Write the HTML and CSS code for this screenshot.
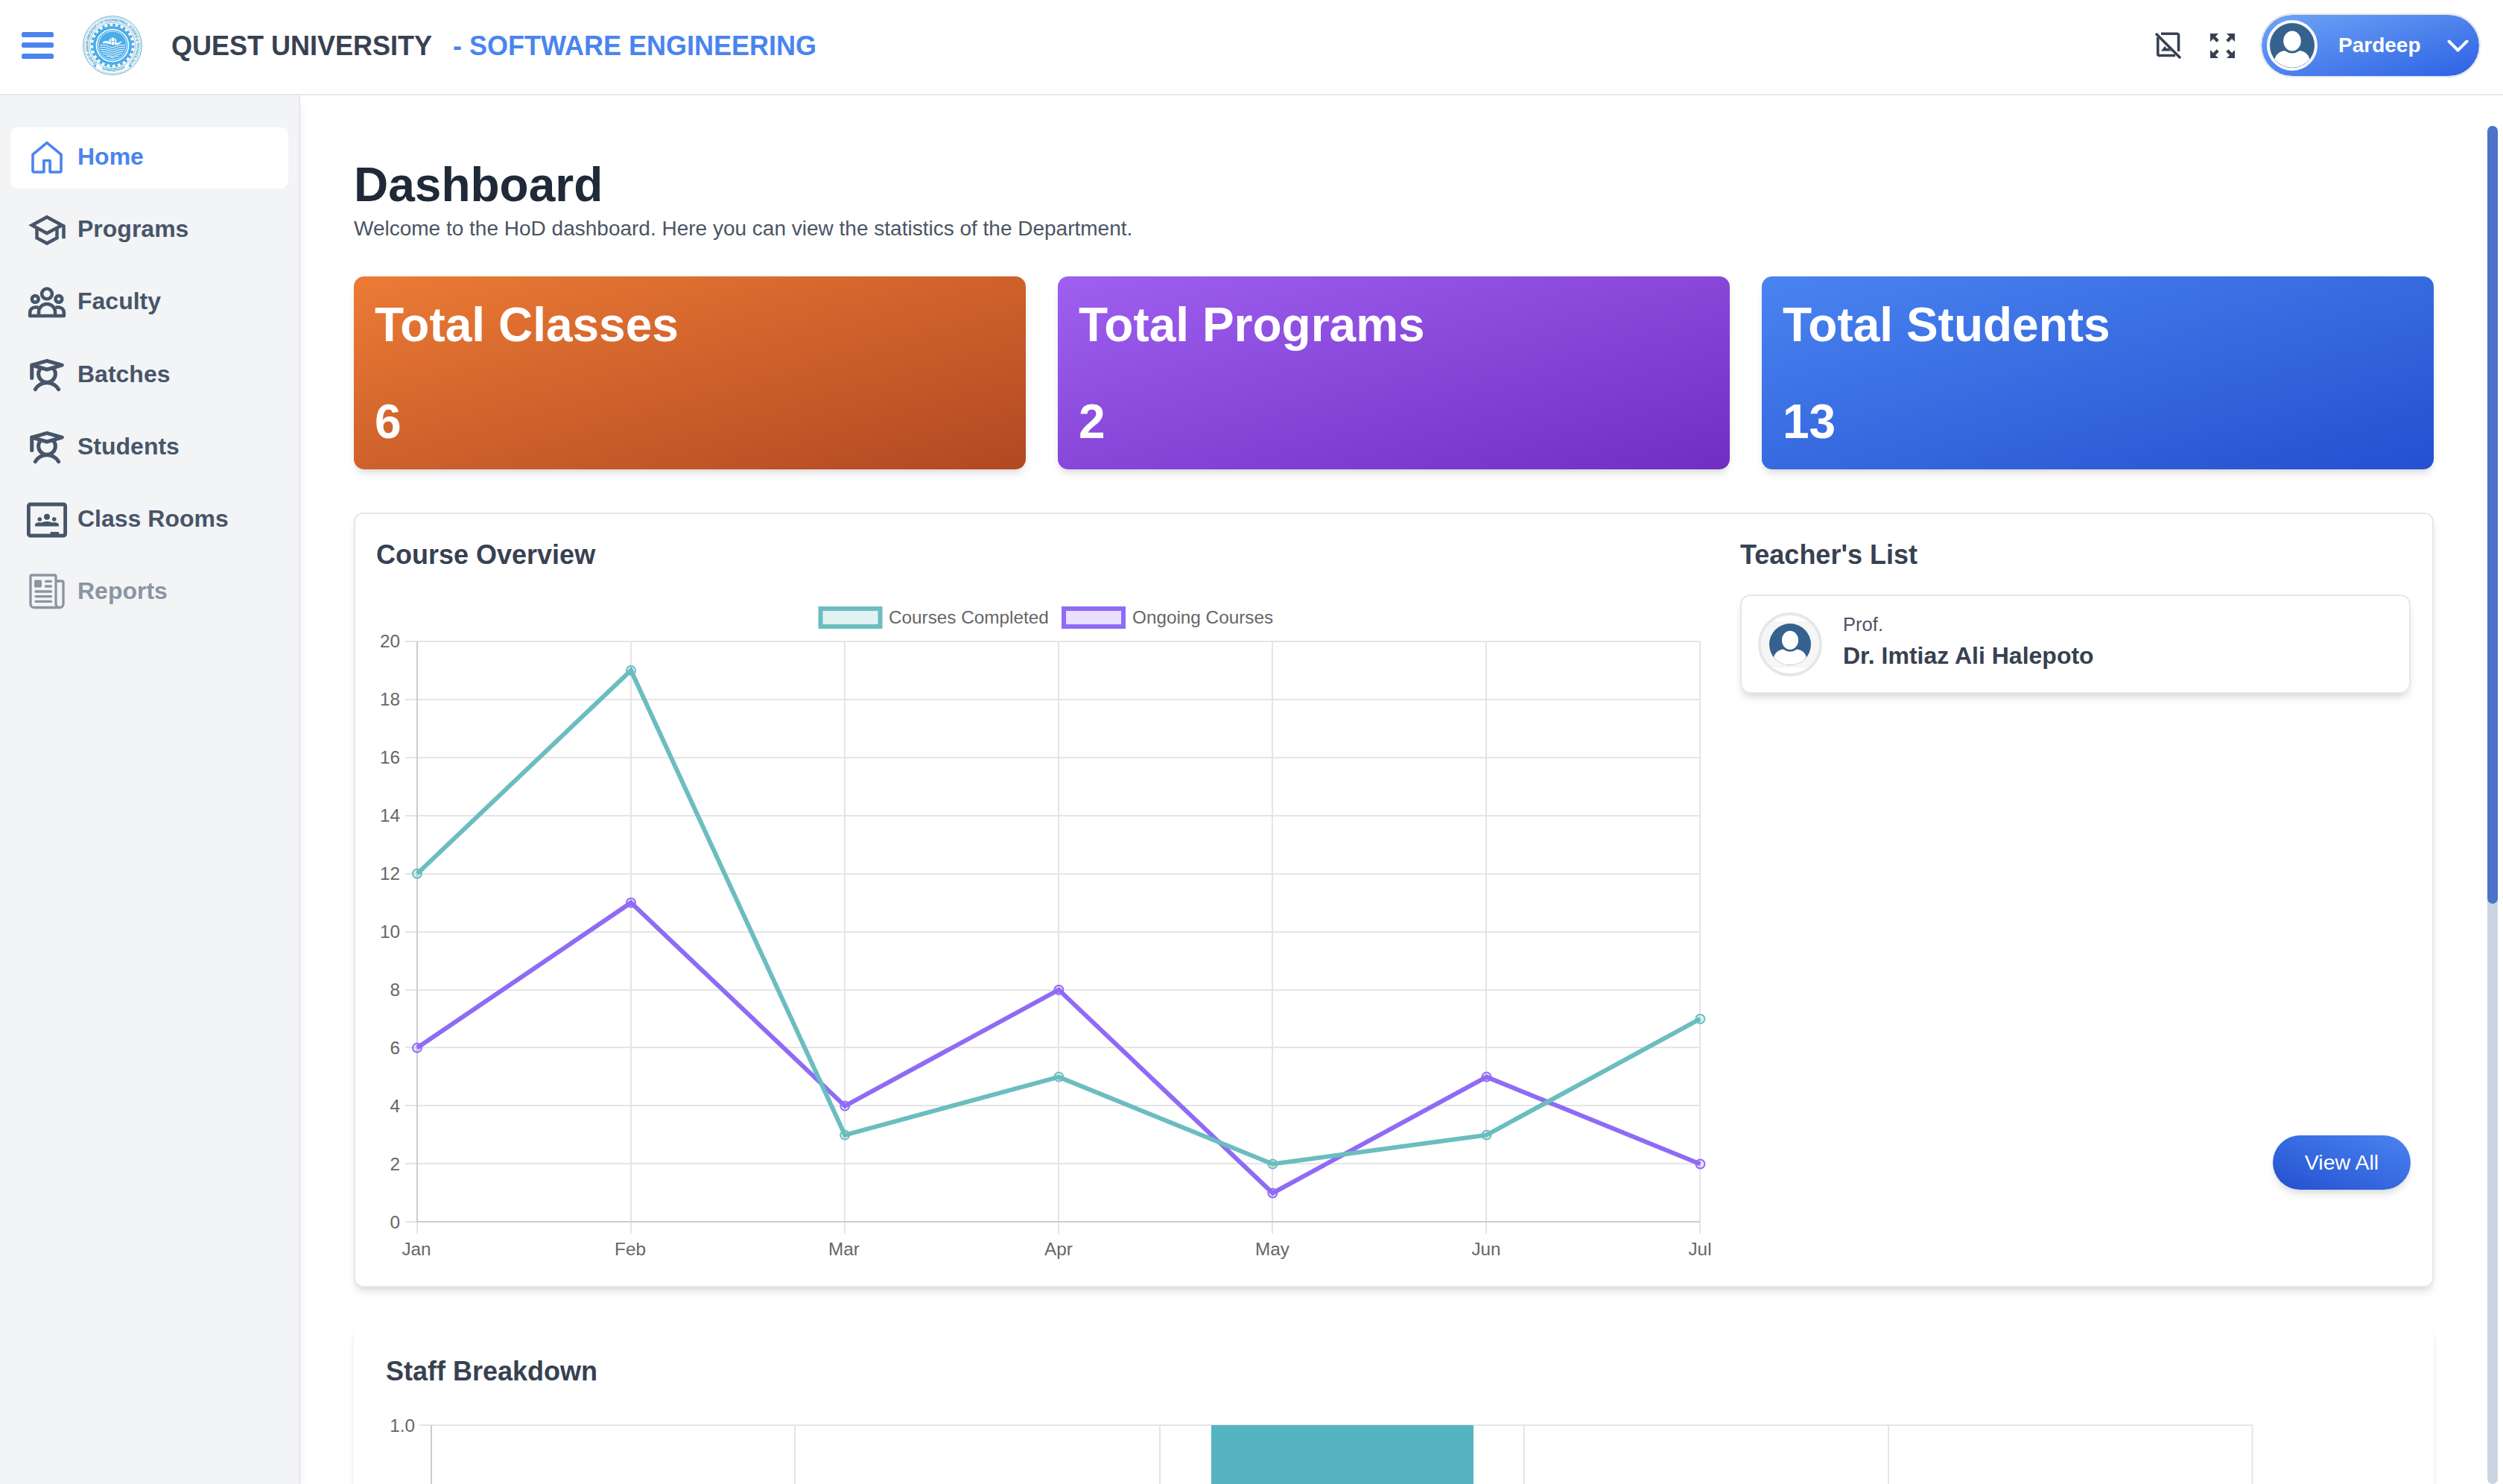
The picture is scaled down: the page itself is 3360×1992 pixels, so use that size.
FILE: index.html
```html
<!DOCTYPE html>
<html lang="en">
<head>
<meta charset="utf-8">
<title>Quest University - Dashboard</title>
<link rel="stylesheet" href="styles.css">
</head>
<body>
<svg class="defs" aria-hidden="true">
  <symbol id="student" viewBox="0 0 256 256">
    <g fill="none" stroke="currentColor" stroke-width="24" stroke-linecap="round" stroke-linejoin="round">
      <path d="M32 62 128 35l96 27-96 28ZM32 62v82M83 88a54 54 0 1 0 90 0M54 216c16-26 42-42 74-42s58 16 74 42"/>
    </g>
  </symbol>
  <symbol id="person" viewBox="0 0 60 60">
    <circle cx="30" cy="30" r="30" fill="#35618e"/>
    <path d="M6.500 48.500C8 42 13 38 20 37q10 7 20 0c7 1 12 5 13.500 11.500A30 30 0 0 1 6.500 48.500Z" fill="#fff"/>
    <ellipse cx="30" cy="24" rx="11.800" ry="13.500" fill="#fff"/>
  </symbol>
</svg>

<header class="topbar">
  <svg class="menu" viewBox="0 0 43 36" fill="#4a84ee"><rect width="43" height="7" rx="2.500"/><rect y="14" width="43" height="7" rx="2.500"/><rect y="29" width="43" height="7" rx="2.500"/></svg>
  <svg class="logo" viewBox="0 0 80 80">
    <defs>
      <path id="arc-top" d="M20.700 66.200A32.500 32.500 0 1 1 59.300 66.200"/>
      <path id="arc-bottom" d="M22 70A35 35 0 0 0 58 70"/>
    </defs>
    <g fill="none" stroke="#5fb0cf">
      <circle cx="40" cy="40" r="39.400" stroke-width="1"/>
      <circle cx="40" cy="40" r="37.600" stroke-width=".5"/>
      <circle cx="40" cy="40" r="30.800" stroke-width=".8"/>
    </g>
    <circle cx="40" cy="40" r="26" fill="#4aace8"/>
    <circle cx="40" cy="40" r="27.500" fill="none" stroke="#4aace8" stroke-width="3.500" stroke-dasharray="3.600 3.600"/>
    <circle cx="40" cy="40" r="21.500" fill="none" stroke="#fff" stroke-width="1.600"/>
    <circle cx="40" cy="40" r="19" fill="none" stroke="#fff" stroke-width=".8"/>
    <circle cx="40.500" cy="34.500" r="5" fill="#fff"/>
    <path d="M27 35c5-2 9-1 13 1 5 2 9 0 13-2-2 4-6 6-11 5-6-1-10-2-15-2Z" fill="#fff"/>
    <path d="M38.500 30v9M42.500 30v9M36 34.500h9" stroke="#4aace8" stroke-width=".7"/>
    <g fill="none" stroke="#fff" stroke-width="1"><path d="M23 39q9 0 17 4 8-4 17-4M23 42q9 0 17 4 8-4 17-4M23.500 45q9 0 16.500 4 8-4 16.500-4M25 48q8 0 15 4 7-4 15-4M27 51q7 0 13 4 6-4 13-4M31 54q5 0 9 3 4-3 9-3"/></g>
    <text class="seal"><textPath href="#arc-top" textLength="158" startOffset="2">QUAID-E-AWAM UNIVERSITY OF ENGINEERING, SCIENCE &amp; TECHNOLOGY</textPath></text>
    <text class="seal seal-town"><textPath href="#arc-bottom" startOffset="4">NAWABSHAH</textPath></text>
    <path d="m16.500 65 .7 1.500 1.700.1-1.300 1.100.4 1.700-1.500-.9-1.500.9.4-1.700-1.300-1.100 1.700-.1ZM63.500 65l.7 1.500 1.700.1-1.300 1.100.4 1.700-1.500-.9-1.500.9.4-1.700-1.300-1.100 1.700-.1Z" fill="#4aace8"/>
  </svg>
  <div class="brand">QUEST UNIVERSITY</div>
  <div class="department">- SOFTWARE ENGINEERING</div>
  <div class="tools">
    <svg class="tool-image" viewBox="0 0 36 36" fill="none" stroke="#374151">
      <path d="M9 2.200h21.500a2 2 0 0 1 2 2V26M4.700 7v22.500a2 2 0 0 0 2 2H28" stroke-width="3.600"/>
      <path d="M2 2 35 35" stroke-width="3.600"/>
      <path d="M9 25.500 14 19l3 3.500 1.500-1.500 4 4.500Z" fill="#374151" stroke="none"/>
    </svg>
    <svg class="tool-expand" viewBox="0 0 33 33">
      <g fill="#374151" stroke="#374151" stroke-width="4.400">
        <path d="M0 0h11L0 11Z M33 0v11L22 0Z M0 33V22l11 11Z M33 33H22l11-11Z" stroke="none"/>
        <path d="m3 3 7.200 7.200M30 3l-7.200 7.200M3 30l7.200-7.200M30 30l-7.200-7.200"/>
      </g>
    </svg>
    <div class="profile">
      <span class="profile-photo"><svg><use href="#person"/></svg></span>
      <span class="profile-name">Pardeep</span>
      <svg class="chevron" viewBox="0 0 29 17"><path d="m2.500 2.500 12 12 12-12" fill="none" stroke="#fff" stroke-width="4" stroke-linecap="round" stroke-linejoin="round"/></svg>
    </div>
  </div>
</header>

<div class="shell">
  <nav class="sidebar">
    <a class="item active"><svg viewBox="0 0 54 54"><path d="M27 6.700 8 22.300V44a2 2 0 0 0 2 2h12.900V30.500h8.200V46H44a2 2 0 0 0 2-2V22.300Z" fill="none" stroke="currentColor" stroke-width="3.600" stroke-linejoin="round"/></svg><span>Home</span></a>
    <a class="item"><svg viewBox="0 0 24 24"><path fill="currentColor" d="M12 3 1 9l4 2.180v6L12 21l7-3.820v-6l2-1.090V17h2V9L12 3zm6.820 6L12 12.720 5.180 9 12 5.280 18.820 9zM17 15.990l-5 2.730-5-2.730v-3.720L12 15l5-2.730v3.720z"/></svg><span>Programs</span></a>
    <a class="item"><svg viewBox="0 0 54 54" fill="none" stroke="currentColor" stroke-width="4.600" stroke-linejoin="round"><circle cx="27" cy="15.400" r="6.900"/><circle cx="11.300" cy="22.400" r="4.400"/><circle cx="42.900" cy="22.400" r="4.400"/><path d="M16 45v-5a11 11 0 0 1 22 0v5M15.500 33.500H11.500A7 7 0 0 0 4.200 40.500v4.500h45.600v-4.500a7 7 0 0 0-7.300-7h-4"/></svg><span>Faculty</span></a>
    <a class="item"><svg><use href="#student"/></svg><span>Batches</span></a>
    <a class="item"><svg><use href="#student"/></svg><span>Students</span></a>
    <a class="item"><svg viewBox="0 0 54 54" fill="currentColor"><rect x="2.400" y="6" width="49.200" height="42" rx="2" fill="none" stroke="currentColor" stroke-width="4.800"/><path d="M31.700 43H43v4H31.700ZM11 35.500v-2c0-3 5-4 9-3 4-2 10-2 14 0 4-1 9 0 9 3v2Z"/><circle cx="17.300" cy="26" r="2.800"/><circle cx="27" cy="22.800" r="4"/><circle cx="36.700" cy="26" r="2.800"/></svg><span>Class Rooms</span></a>
    <a class="item disabled"><svg viewBox="0 0 54 54" fill="none" stroke="currentColor" stroke-width="3.300" stroke-linecap="round" stroke-linejoin="round"><path d="M44 47.500H9.500A4.500 4.500 0 0 1 5 43V6a2 2 0 0 1 2-2h30a2 2 0 0 1 2 2v36.500a5 5 0 0 0 10 0V14a2 2 0 0 0-2-2h-8M25.500 12.400h7M25.500 19h7M12 26h20.500M12 32.700h20.500M12 39.400h20.500"/><rect x="10" y="10.500" width="10" height="10" rx="1.500" fill="currentColor" stroke="none"/></svg><span>Reports</span></a>
  </nav>

  <main class="main">
    <h1>Dashboard</h1>
    <p class="intro">Welcome to the HoD dashboard. Here you can view the statistics of the Department.</p>

    <section class="stats">
      <div class="stat orange"><h2>Total Classes</h2><b>6</b></div>
      <div class="stat purple"><h2>Total Programs</h2><b>2</b></div>
      <div class="stat blue"><h2>Total Students</h2><b>13</b></div>
    </section>

    <section class="overview">
      <div class="courses">
        <h3>Course Overview</h3>
        <svg class="line-chart" viewBox="505 790 1800 910">
          <g stroke-width="6">
            <rect x="1101.500" y="817" width="80" height="24" fill="#e0f2f2" stroke="#6bbdbf"/>
            <rect x="1428" y="817" width="80" height="24" fill="#e8e0fd" stroke="#8f6bf5"/>
          </g>
          <text x="1193" y="837">Courses Completed</text>
          <text x="1520" y="837">Ongoing Courses</text>
          <path class="grid" d="M544 861H2282M544 939H2282M544 1017H2282M544 1095H2282M544 1173H2282M544 1251H2282M544 1329H2282M544 1406H2282M544 1484H2282M544 1562H2282M544 1640H560M847 861V1656M1134 861V1656M1421 861V1656M1708 861V1656M1995 861V1656M2282 861V1656M560 1640V1656"/>
          <path class="axis" d="M560 861V1640H2282"/>
          <g class="ticks-y">
            <text x="537" y="869">20</text><text x="537" y="947">18</text><text x="537" y="1025">16</text><text x="537" y="1103">14</text><text x="537" y="1181">12</text><text x="537" y="1259">10</text><text x="537" y="1337">8</text><text x="537" y="1415">6</text><text x="537" y="1493">4</text><text x="537" y="1571">2</text><text x="537" y="1649">0</text>
          </g>
          <g class="ticks-x">
            <text x="559" y="1685">Jan</text><text x="846" y="1685">Feb</text><text x="1133" y="1685">Mar</text><text x="1421" y="1685">Apr</text><text x="1708" y="1685">May</text><text x="1995" y="1685">Jun</text><text x="2282" y="1685">Jul</text>
          </g>
          <g class="series ongoing">
            <polyline points="560,1406.600 847,1211.700 1134.200,1484.600 1421.300,1328.700 1708.400,1601.500 1995.500,1445.600 2282.400,1562.500"/>
            <circle cx="560" cy="1406.600" r="6"/><circle cx="847" cy="1211.700" r="6"/><circle cx="1134.200" cy="1484.600" r="6"/><circle cx="1421.300" cy="1328.700" r="6"/><circle cx="1708.400" cy="1601.500" r="6"/><circle cx="1995.500" cy="1445.600" r="6"/><circle cx="2282.400" cy="1562.500" r="6"/>
          </g>
          <g class="series completed">
            <polyline points="560,1172.800 847,899.900 1134.200,1523.600 1421.300,1445.600 1708.400,1562.500 1995.500,1523.600 2282.400,1367.700"/>
            <circle cx="560" cy="1172.800" r="6"/><circle cx="847" cy="899.900" r="6"/><circle cx="1134.200" cy="1523.600" r="6"/><circle cx="1421.300" cy="1445.600" r="6"/><circle cx="1708.400" cy="1562.500" r="6"/><circle cx="1995.500" cy="1523.600" r="6"/><circle cx="2282.400" cy="1367.700" r="6"/>
          </g>
        </svg>
      </div>
      <div class="teachers">
        <h3>Teacher's List</h3>
        <div class="teacher">
          <span class="teacher-photo"><span class="photo-band"><svg viewBox="0 0 60 60"><use href="#person"/></svg></span></span>
          <div class="teacher-text"><div class="rank">Prof.</div><div class="name">Dr. Imtiaz Ali Halepoto</div></div>
        </div>
        <button class="view-all">View All</button>
      </div>
    </section>

    <section class="staff">
      <h3>Staff Breakdown</h3>
      <svg class="bar-chart" viewBox="517 1880 2520 300">
        <path class="grid" d="M563 1913H3024M1067 1913V2180M1557 1913V2180M2046 1913V2180M2535 1913V2180M3023.500 1913V2180"/>
        <path class="axis" d="M579 1913V2180"/>
        <rect x="1626" y="1913" width="352" height="267" fill="#56b4c2"/>
        <text class="tick" x="557" y="1922">1.0</text>
      </svg>
    </section>
  </main>

  <div class="scroll-track"><div class="scroll-thumb"></div></div>
</div>
</body>
</html>
```
FILE: styles.css
```css
* { box-sizing: border-box; margin: 0; padding: 0; }

body {
  width: 3360px;
  height: 1992px;
  overflow: hidden;
  display: flex;
  flex-direction: column;
  background: #fff;
  color: #374151;
  font-family: "Liberation Sans", Arial, sans-serif;
}

svg { display: block; flex: none; }
.defs { position: absolute; width: 0; height: 0; }

/* Top bar */
.topbar {
  flex: none;
  height: 128px;
  padding: 0 30px 4px 29px;
  display: flex;
  align-items: center;
  border-bottom: 2px solid #e5e7eb;
  font-size: 36px;
  font-weight: 700;
  white-space: nowrap;
}
.menu { width: 43px; height: 36px; }
.logo { width: 80px; height: 80px; margin-left: 39px; }
.seal { font-size: 5.2px; font-weight: 700; fill: #4ba3c6; }
.seal-town { font-size: 5px; }
.brand { margin-left: 39px; width: 378px; padding-top: 1px; }
.department { padding-top: 1px; color: #4a84ee; }
.tools { margin-left: auto; display: flex; align-items: center; }
.tool-image { width: 36px; height: 36px; margin-right: 39px; }
.tool-expand { width: 33px; height: 33px; margin-right: 34px; }
.profile {
  width: 296px;
  height: 86px;
  display: flex;
  align-items: center;
  padding: 0 14px 0 7px;
  border: 2px solid #e5e7eb;
  border-radius: 43px;
  background: linear-gradient(to bottom right, #6ea5f6, #2d61e4);
  background-clip: padding-box;
  color: #fff;
  font-size: 28px;
}
.profile-photo {
  width: 68px;
  height: 68px;
  border: 4px solid #f8f8f8;
  border-radius: 50%;
  background: #f8f8f8;
}
.profile-photo svg { width: 60px; height: 60px; }
.profile-name { margin-left: 28px; }
.chevron { width: 29px; height: 17px; margin-left: auto; }

/* Page shell */
.shell { flex: 1; min-height: 0; display: flex; overflow: hidden; }

.sidebar {
  flex: none;
  width: 403px;
  padding: 43px 14px;
  display: flex;
  flex-direction: column;
  gap: 15.2px;
  background: #f3f4f6;
  border-right: 2px solid #e5e7eb;
  box-shadow: 0 8px 12px -2px rgba(0, 0, 0, .1);
  color: #475569;
}
.item {
  flex: none;
  height: 82px;
  padding-left: 22px;
  display: flex;
  align-items: center;
  gap: 14px;
  border-radius: 10px;
  font-size: 32px;
  font-weight: 700;
}
.item svg { width: 54px; height: 54px; }
.item span { padding-bottom: 3px; }
.item.active { background: #fff; color: #4a84ee; }
.item.disabled { opacity: .6; }

/* Main column */
.main { width: 2864px; padding: 84px 0 0 72px; }
h1 { font-size: 64px; line-height: 72px; color: #1f2937; }
.intro { margin-top: 3px; font-size: 28px; line-height: 40px; color: #4b5563; }

.stats { margin-top: 44px; display: grid; grid-template-columns: repeat(3, 1fr); gap: 43px; }
.stat {
  height: 259px;
  padding: 29px 28px 0;
  display: flex;
  flex-direction: column;
  gap: 58px;
  border-radius: 14px;
  color: #fff;
  box-shadow: 0 8px 12px -2px rgba(0, 0, 0, .1), 0 4px 8px -4px rgba(0, 0, 0, .1);
}
.stat h2, .stat b { font-size: 64px; line-height: 72px; }
.orange { background: linear-gradient(to bottom right, #ec7b35, #b14822); }
.purple { background: linear-gradient(to bottom right, #9f5ff0, #702fc2); }
.blue { background: linear-gradient(to bottom right, #4a84f0, #2450d0); }

h3 { font-size: 36px; line-height: 48px; color: #374151; }

.overview {
  height: 1040px;
  margin-top: 58px;
  display: flex;
  border: 2px solid #e5e7eb;
  border-radius: 12px;
  box-shadow: 0 8px 12px -2px rgba(0, 0, 0, .1), 0 4px 8px -4px rgba(0, 0, 0, .1);
}
.courses { width: 1859px; padding: 31px 0 0 28px; }
.line-chart { width: 1800px; height: 910px; margin-top: 21px; }
.line-chart text, .bar-chart text { font-size: 24.3px; fill: #666; }
.ticks-y text, .bar-chart .tick { text-anchor: end; }
.ticks-x text { text-anchor: middle; }
.grid { fill: none; stroke: #e5e5e5; stroke-width: 2; }
.axis { fill: none; stroke: #ccc; stroke-width: 2; }
.series polyline { fill: none; stroke-width: 6; stroke-linejoin: miter; }
.series circle { stroke-width: 2; }
.completed { stroke: #6bbdbf; fill: rgba(107, 189, 191, .2); }
.ongoing { stroke: #8f6bf5; fill: rgba(143, 107, 245, .2); }

.teachers { flex: 1; padding: 31px 29px 129px 0; display: flex; flex-direction: column; }
.teacher {
  height: 133px;
  margin-top: 29px;
  padding-left: 22px;
  display: flex;
  align-items: center;
  border: 2px solid #e5e7eb;
  border-radius: 14px;
  box-shadow: 0 8px 12px -2px rgba(0, 0, 0, .1), 0 4px 8px -4px rgba(0, 0, 0, .1);
}
.teacher-photo {
  width: 86px;
  height: 86px;
  display: flex;
  align-items: center;
  overflow: hidden;
  border: 4px solid #e5e7eb;
  border-radius: 50%;
}
.photo-band { width: 78px; height: 62px; padding: 3px 11px; background: #f6f6f6; }
.photo-band svg { width: 56px; height: 56px; }
.teacher-text { margin-left: 28px; padding-bottom: 7px; white-space: nowrap; }
.rank { font-size: 25.600px; line-height: 38px; color: #4b5563; }
.name { font-size: 32px; line-height: 46px; font-weight: 700; }
.view-all {
  align-self: flex-end;
  width: 185px;
  height: 73px;
  margin-top: auto;
  border: 0;
  border-radius: 37px;
  background: linear-gradient(to top right, #2450d0, #4a84f0);
  color: #fff;
  font: 28.5px "Liberation Sans", Arial, sans-serif;
  box-shadow: 0 8px 12px -2px rgba(0, 0, 0, .1), 0 4px 8px -4px rgba(0, 0, 0, .1);
}

.staff {
  margin-top: 43px;
  height: 600px;
  padding: 46px 42px;
  border-radius: 24px;
  box-shadow: 0 8px 12px -2px rgba(0, 0, 0, .1), 0 4px 8px -4px rgba(0, 0, 0, .1);
}
.staff h3 { padding-left: 1px; }
.bar-chart { width: 2520px; height: 300px; margin-top: 15px; }

/* Scroll bar */
.scroll-track { width: 14px; margin: 41px 0 0 72px; border-radius: 7px; background: #cbd5e1; }
.scroll-thumb { height: 1044px; border-radius: 7px; background: #4a73c9; }
```
